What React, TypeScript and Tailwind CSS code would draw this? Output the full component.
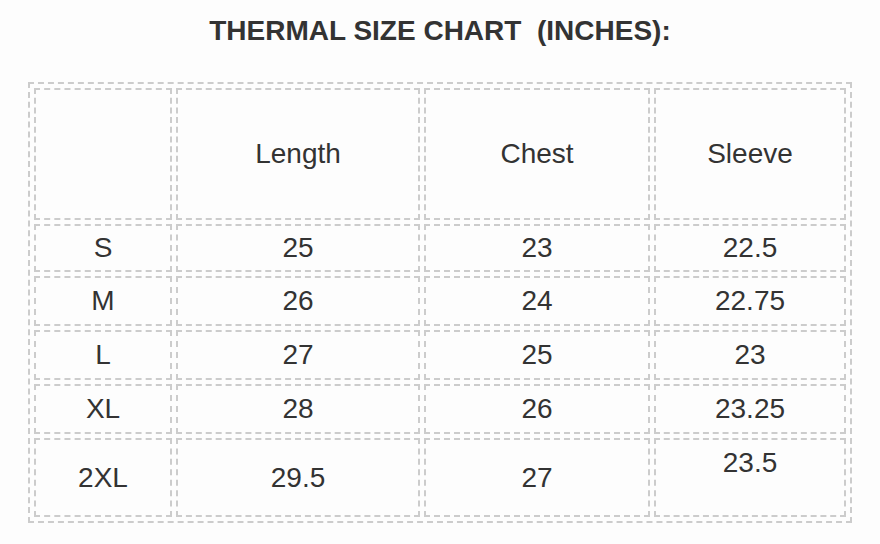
import React from "react";

const rows: { size: string; length: string; chest: string; sleeve: string; h: string; tall?: boolean }[] = [
  { size: "S", length: "25", chest: "23", sleeve: "22.5", h: "h-[48px]" },
  { size: "M", length: "26", chest: "24", sleeve: "22.75", h: "h-[50px]" },
  { size: "L", length: "27", chest: "25", sleeve: "23", h: "h-[50px]" },
  { size: "XL", length: "28", chest: "26", sleeve: "23.25", h: "h-[50px]" },
  { size: "2XL", length: "29.5", chest: "27", sleeve: "23.5", h: "h-[79px]", tall: true },
];

const cell = "border-2 border-dashed border-[#cccccc] text-center align-middle p-0";

export default function App() {
  return (
    <div
      className="w-[880px] h-[544px] bg-[#fdfdfd] text-[#333333] overflow-hidden"
      style={{ fontFamily: '"Liberation Sans", Arial, sans-serif' }}
    >
      <h1 className="pt-[14px] h-[82px] text-center text-[28px] leading-[34px] font-bold">
        THERMAL SIZE CHART&nbsp; (INCHES):
      </h1>
      <div className="px-[28px]">
        <table className="w-[824px] border-separate border-spacing-[4px] border-2 border-dashed border-[#cccccc] text-[28px] leading-[32px] table-fixed">
          <colgroup>
            <col className="w-[138px]" />
            <col className="w-[244px]" />
            <col className="w-[226px]" />
            <col className="w-[192px]" />
          </colgroup>
          <tbody>
            <tr className="h-[132px]">
              <td className={cell}></td>
              <td className={cell}>Length</td>
              <td className={cell}>Chest</td>
              <td className={cell}>Sleeve</td>
            </tr>
            {rows.map((r) => (
              <tr key={r.size} className={r.h}>
                <td className={cell}>{r.size}</td>
                <td className={cell}>{r.length}</td>
                <td className={cell}>{r.chest}</td>
                <td className={r.tall ? `${cell} pb-[30px]` : cell}>{r.sleeve}</td>
              </tr>
            ))}
          </tbody>
        </table>
      </div>
    </div>
  );
}
